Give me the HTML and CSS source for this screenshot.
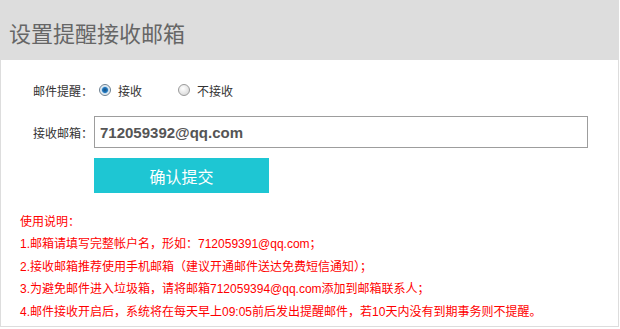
FILE: index.html
```html
<!DOCTYPE html>
<html lang="zh-CN">
<head>
<meta charset="utf-8">
<title>设置提醒接收邮箱</title>
<link rel="stylesheet" href="styles.css">
</head>
<body>
<div class="panel">
  <div class="header"><h1 class="title">设置提醒接收邮箱</h1></div>
  <div class="content">
    <div class="row row-radio">
      <span class="label">邮件提醒：</span>
      <label class="opt"><input class="radio" type="radio" name="remind" checked><span>接收</span></label>
      <label class="opt"><input class="radio" type="radio" name="remind"><span>不接收</span></label>
    </div>
    <div class="row row-input">
      <span class="label">接收邮箱：</span>
      <input class="email" type="text" value="712059392@qq.com">
    </div>
    <div class="row row-btn">
      <button class="submit" type="button">确认提交</button>
    </div>
  </div>
  <div class="notes">
    <p>使用说明：</p>
    <p>1.邮箱请填写完整帐户名，形如：712059391@qq.com；</p>
    <p>2.接收邮箱推荐使用手机邮箱（建议开通邮件送达免费短信通知）；</p>
    <p>3.为避免邮件进入垃圾箱，请将邮箱712059394@qq.com添加到邮箱联系人；</p>
    <p>4.邮件接收开启后，系统将在每天早上09:05前后发出提醒邮件，若10天内没有到期事务则不提醒。</p>
  </div>
</div>
</body>
</html>
```

FILE: styles.css
```css
html, body {
  margin: 0;
  padding: 0;
  background: #fff;
}
body {
  font-family: "Liberation Sans", "Noto Sans CJK SC", sans-serif;
}
.panel {
  width: 617px;
  height: 326px;
  border: 1px solid #dddddd;
  border-top: none;
  background: #fff;
}
.header {
  height: 60px;
  margin: 0 -1px;
  background: #dddddd;
  display: flex;
  align-items: center;
}
.title {
  margin: 0;
  padding: 3px 0 0 9px;
  font-family: "Noto Sans CJK SC", sans-serif;
  font-size: 22px;
  font-weight: normal;
  color: #666666;
  line-height: 30px;
}
.content {
  padding: 18px 0 0 32px;
}
.row {
  display: flex;
  align-items: center;
}
.label {
  width: 61px;
  flex: none;
  font-family: "Noto Sans CJK SC", sans-serif;
  font-size: 12px;
  color: #333;
}
.row-radio {
  height: 24px;
}
.opt {
  display: flex;
  align-items: center;
  font-family: "Noto Sans CJK SC", sans-serif;
  font-size: 12px;
  color: #333;
  margin-right: 31px;
}
.radio {
  appearance: none;
  -webkit-appearance: none;
  width: 12px;
  height: 12px;
  margin: 0 7px 0 5px;
  border-radius: 50%;
  border: 1px solid #9a9a9a;
  background: radial-gradient(circle at 40% 35%, #ffffff 0%, #e6e6e6 55%, #cfcfcf 100%);
  box-sizing: border-box;
}
.radio:checked {
  border-color: #6b7f90;
  background: radial-gradient(circle at 50% 50%, #1c4d7a 0px, #1f78c1 2.5px, #cfe3f2 3.6px, #f2f2f2 5px);
}
.row-input {
  margin-top: 14px;
}
.email {
  width: 494px;
  height: 32px;
  box-sizing: border-box;
  border: 1px solid #9d9d9d;
  padding: 0 0 0 5px;
  margin: 0;
  font-family: "Liberation Sans", sans-serif;
  font-weight: bold;
  font-size: 15px;
  color: #555555;
  outline: none;
}
.row-btn {
  margin-top: 10px;
  padding-left: 61px;
}
.submit {
  width: 175px;
  height: 35px;
  border: none;
  margin: 0;
  padding: 0;
  background: #1ec6d3;
  color: #ffffff;
  font-family: "Noto Sans CJK SC", sans-serif;
  font-size: 16px;
  cursor: pointer;
}
.notes {
  padding: 18px 0 0 19px;
  color: #ff0000;
  font-size: 12px;
  line-height: 22.4px;
}
.notes p {
  margin: 0;
}
```
